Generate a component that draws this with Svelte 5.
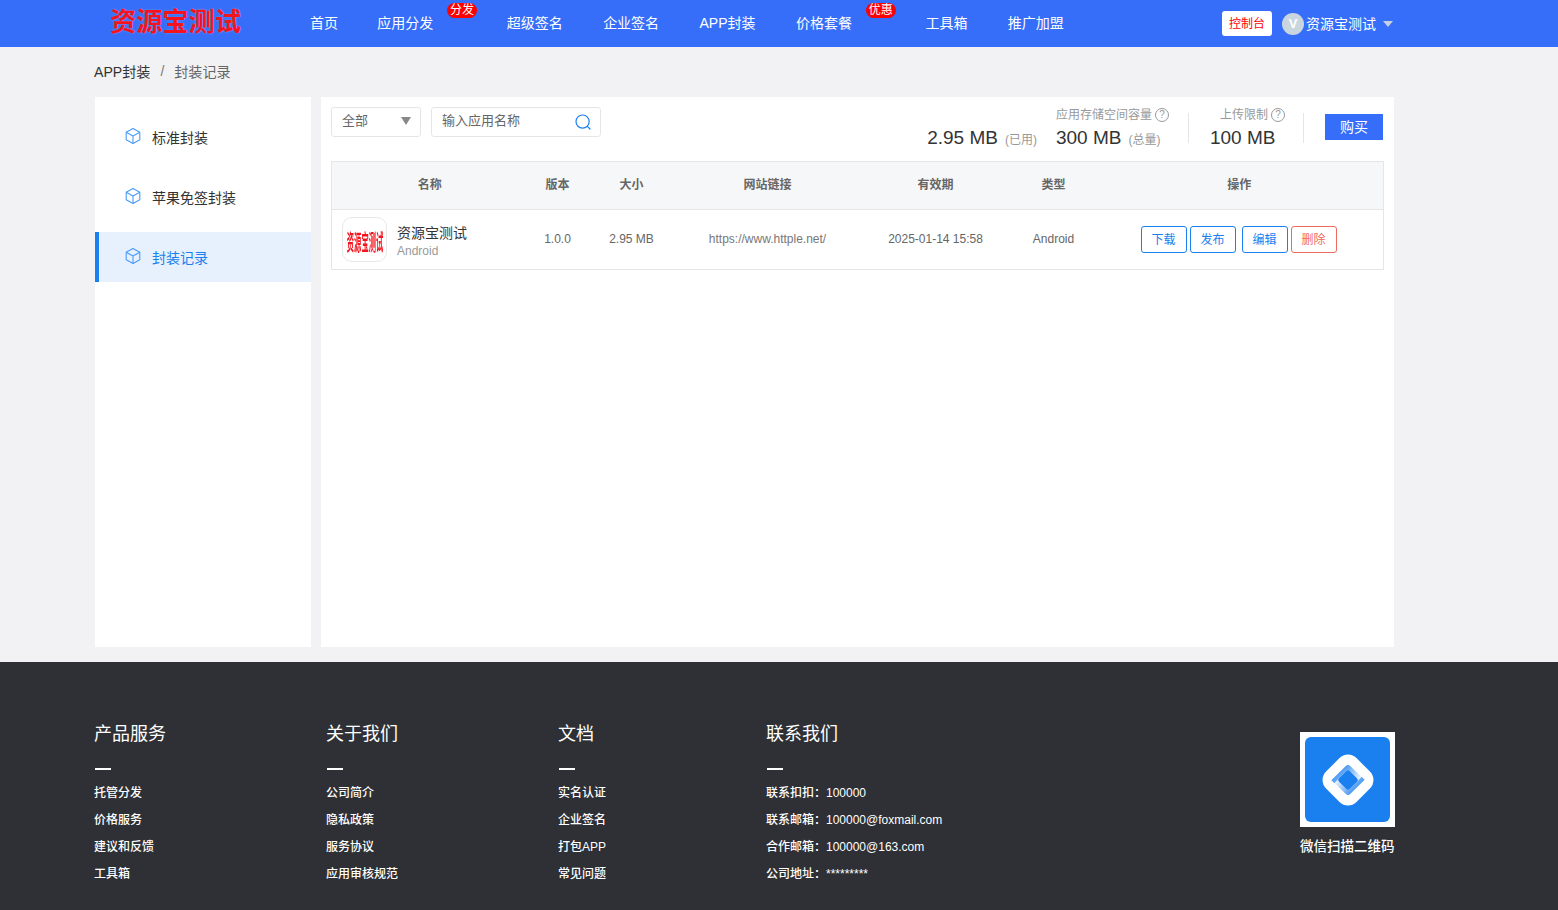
<script>
  const nav = [
    { t: '首页' }, { t: '应用分发', badge: '分发' }, { t: '超级签名' }, { t: '企业签名' },
    { t: 'APP封装' }, { t: '价格套餐', badge: '优惠' }, { t: '工具箱' }, { t: '推广加盟' }
  ];
  const side = [
    { t: '标准封装' }, { t: '苹果免签封装' }, { t: '封装记录', active: true }
  ];
  const cols = ['名称', '版本', '大小', '网站链接', '有效期', '类型', '操作'];
  const footer = [
    { h: '产品服务', w: 'w1', items: ['托管分发', '价格服务', '建议和反馈', '工具箱'] },
    { h: '关于我们', w: 'w1', items: ['公司简介', '隐私政策', '服务协议', '应用审核规范'] },
    { h: '文档', w: 'w2', items: ['实名认证', '企业签名', '打包APP', '常见问题'] },
    { h: '联系我们', w: 'w3', items: ['联系扣扣\uFF1A100000', '联系邮箱\uFF1A100000@foxmail.com', '合作邮箱\uFF1A100000@163.com', '公司地址\uFF1A*********'] }
  ];
</script>

<div class="page">
  <header class="top">
    <div class="logo">资源宝测试</div>
    <nav class="nav">
      {#each nav as n}
        <a class="nav-item" class:has-badge={n.badge}>
          {n.t}
          {#if n.badge}<span class="badge">{n.badge}</span>{/if}
        </a>
      {/each}
    </nav>
    <div class="user">
      <span class="console">控制台</span>
      <span class="avatar">V</span>
      <span class="uname">资源宝测试</span>
      <span class="caret"></span>
    </div>
  </header>

  <div class="crumbs"><span class="c1">APP封装</span><span class="sep">/</span><span class="c2">封装记录</span></div>

  <main class="main">
    <aside class="side">
      {#each side as s}
        <div class="side-item" class:active={s.active}>
          <svg class="cube" viewBox="0 0 16 16" width="16" height="16" fill="none" stroke="#4a9bf5" stroke-width="1.100" stroke-linejoin="round">
            <path d="M8 .6 14.800 4.300V11.700L8 15.400 1.200 11.700V4.300Z" />
            <path d="M1.200 4.300 8 8.100 14.800 4.300M8 8.100V15.400" />
          </svg>
          <span>{s.t}</span>
        </div>
      {/each}
    </aside>

    <section class="content">
      <div class="toolbar">
        <div class="select"><span>全部</span><i class="sel-caret"></i></div>
        <div class="search">
          <span>输入应用名称</span>
          <svg viewBox="0 0 16 16" width="16" height="16" fill="none" stroke="#1a7fef" stroke-width="1.200" stroke-linecap="round">
            <circle cx="7.600" cy="7.600" r="6.600" />
            <path d="M12.400 12.400 15 15" />
          </svg>
        </div>
        <div class="stats">
          <div class="stat used"><div class="val">2.95 MB<small>(已用)</small></div></div>
          <div class="stat total">
            <div class="lbl">应用存储空间容量<span class="q">?</span></div>
            <div class="val">300 MB<small>(总量)</small></div>
          </div>
          <div class="divider"></div>
          <div class="stat limit">
            <div class="lbl">上传限制<span class="q">?</span></div>
            <div class="val">100 MB</div>
          </div>
          <div class="divider d2"></div>
          <button class="buy">购买</button>
        </div>
      </div>

      <table class="table">
        <colgroup>
          <col style="width:196px" /><col style="width:60px" /><col style="width:88px" /><col style="width:184px" />
          <col style="width:152px" /><col style="width:84px" /><col />
        </colgroup>
        <thead>
          <tr>{#each cols as c}<th>{c}</th>{/each}</tr>
        </thead>
        <tbody>
          <tr>
            <td class="app">
              <div class="app-wrap">
                <div class="app-icon"><span>资源宝测试</span></div>
                <div class="app-txt"><div class="app-name">资源宝测试</div><div class="app-os">Android</div></div>
              </div>
            </td>
            <td>1.0.0</td>
            <td>2.95 MB</td>
            <td class="link">https://www.httple.net/</td>
            <td>2025-01-14 15:58</td>
            <td>Android</td>
            <td class="ops-cell">
              <div class="ops">
                <span class="op">下载</span><span class="op">发布</span><span class="op gap">编辑</span><span class="op del">删除</span>
              </div>
            </td>
          </tr>
        </tbody>
      </table>
    </section>
  </main>

  <footer class="foot">
    <div class="foot-in">
      {#each footer as f}
        <div class="fcol {f.w}">
          <div class="fh">{f.h}</div>
          <div class="dash"></div>
          {#each f.items as it}<div class="fi">{it}</div>{/each}
        </div>
      {/each}
      <div class="qr">
        <div class="qr-box">
          <div class="qr-inner">
            <svg viewBox="0 0 52 52" width="52" height="52">
              <defs>
                <linearGradient id="g1" gradientUnits="userSpaceOnUse" x1="14" y1="26" x2="36" y2="26">
                  <stop offset="0" stop-color="#1a7fef" stop-opacity=".8" />
                  <stop offset="1" stop-color="#1a7fef" stop-opacity="0" />
                </linearGradient>
              </defs>
              <g transform="rotate(45 26 26)">
                <rect x="4.500" y="4.500" width="43" height="43" rx="12" fill="#fff" />
                <path d="M14.500 38V18Q14.500 14.500 18 14.500H38V18.500H20Q18.500 18.500 18.500 20V38Z" fill="url(#g1)" />
                <path d="M14.500 38V18Q14.500 14.500 18 14.500H38V18.500H20Q18.500 18.500 18.500 20V38Z" fill="url(#g1)" transform="rotate(180 26 26)" />
                <rect x="18.500" y="18.500" width="15" height="15" rx="2" fill="#1a7fef" />
              </g>
            </svg>
          </div>
        </div>
        <div class="qr-t">微信扫描二维码</div>
      </div>
    </div>
  </footer>
</div>

<style>
  :global(body) {
    margin: 0;
    background: #f2f2f4;
    font-family: "Liberation Sans", "Noto Sans CJK SC", sans-serif;
  }
  .page { width: 1558px; height: 910px; overflow: hidden; display: flex; flex-direction: column; }
  .top { height: 47px; background: #366efa; display: flex; align-items: center; padding-left: 110px; box-sizing: border-box; flex: none; }
  .logo { width: 179.800px; font-size: 26.200px; font-weight: 700; color: #f5141e; line-height: 47px; white-space: nowrap; padding-bottom: 2px; text-shadow: 0 0 2px rgba(255, 255, 255, .35); }
  .nav { display: flex; }
  .nav-item { position: relative; padding: 0 20.200px; color: #fff; font-size: 14px; line-height: 47px; white-space: nowrap; }
  .nav-item:first-child { padding-right: 19px; }
  .nav-item.has-badge { padding-right: 53.400px; }
  .badge { position: absolute; left: 90px; top: 3px; width: 30px; height: 15px; border-radius: 8px; background: #f00; color: #fff; font-size: 12px; line-height: 14px; text-align: center; }
  .user { position: absolute; left: 1222px; top: 11px; display: flex; align-items: center; height: 25px; }
  .console { width: 50px; height: 25px; background: #fff; border-radius: 3px; color: #f00; font-size: 12px; line-height: 26px; text-align: center; }
  .avatar { width: 22px; height: 22px; margin-left: 10px; border-radius: 50%; background: #c9d6e0; color: #fff; font-size: 13px; font-weight: 700; line-height: 22px; text-align: center; }
  .uname { margin-left: 2px; color: #fff; font-size: 14px; padding-bottom: 2px; }
  .caret { margin-left: 7px; width: 0; height: 0; border-left: 5.500px solid transparent; border-right: 5.500px solid transparent; border-top: 6px solid #c5cfe0; }

  .crumbs { height: 50px; padding: 0 0 2px 94px; box-sizing: border-box; display: flex; align-items: center; font-size: 14.100px; flex: none; }
  .c1 { color: #333; }
  .sep { color: #777; margin: 0 10px; font-size: 14px; }
  .c2 { color: #666; }

  .main { display: flex; margin-left: 95px; width: 1299px; height: 550px; gap: 10px; flex: none; }
  .side { width: 216px; background: #fff; padding-top: 15px; box-sizing: border-box; flex: none; }
  .side-item { height: 50px; margin-bottom: 10px; display: flex; align-items: center; padding-left: 30px; box-sizing: border-box; font-size: 14px; color: #333; }
  .side-item span { margin-left: 11px; }
  .cube { margin-top: -3px; }
  .side-item.active { background: #e6f1fd; color: #1a7fef; border-left: 4px solid #1a7fef; padding-left: 26px; }

  .content { flex: 1; background: #fff; padding: 10px; box-sizing: border-box; }
  .toolbar { display: flex; height: 30px; margin-bottom: 24px; position: relative; }
  .select, .search { height: 30px; box-sizing: border-box; border: 1px solid #e4e6ea; border-radius: 3px; display: flex; align-items: center; font-size: 13px; color: #666; }
  .select { width: 90px; padding: 0 9px 0 10px; justify-content: space-between; }
  .select span, .search span { padding-bottom: 5px; }
  .sel-caret { width: 0; height: 0; margin-bottom: 2px; border-left: 5px solid transparent; border-right: 5px solid transparent; border-top: 8px solid #888; }
  .search { width: 170px; margin-left: 10px; padding: 0 9px 0 10px; justify-content: space-between; }
  .stats { margin-left: auto; display: flex; align-items: flex-start; }
  .stat { display: flex; flex-direction: column; }
  .used { margin-right: 19px; }
  .lbl { font-size: 12px; color: #999; line-height: 14px; display: flex; align-items: center; white-space: nowrap; margin-top: 1px; }
  .q { width: 12px; height: 12px; margin-left: 3px; border: 1px solid #999; border-radius: 50%; font-size: 10px; line-height: 12px; text-align: center; color: #999; }
  .val { font-size: 19px; color: #333; line-height: 24px; margin-top: 4px; white-space: nowrap; }
  .val small { font-size: 12px; color: #999; margin-left: 7px; }
  .used .val { margin-top: 19px; }
  .divider { width: 1px; height: 30px; background: #e5e5e5; margin: 6px 0 0 19px; }
  .limit { margin-left: 21px; }
  .limit .lbl { margin-left: 10px; }
  .divider.d2 { margin-left: 18px; }
  .buy { width: 58px; height: 26px; margin: 7px 1px 0 21px; padding: 0 0 2px; border: 0; background: #366efa; color: #fff; font: inherit; font-size: 14px; }

  .table { width: 1053px; border-collapse: collapse; table-layout: fixed; font-size: 12px; color: #666; }
  th, td { text-align: center; padding: 0; border-top: 1px solid #e6e6e6; border-bottom: 1px solid #e6e6e6; }
  th:first-child, td:first-child { border-left: 1px solid #e6e6e6; }
  th:last-child, td:last-child { border-right: 1px solid #e6e6e6; }
  th { height: 48px; padding-bottom: 4px; box-sizing: border-box; background: #f6f7f9; font-weight: 700; color: #666; }
  td { height: 60px; padding-bottom: 2px; box-sizing: border-box; }
  td.app, td.ops-cell { padding-bottom: 0; }
  .app-wrap { display: flex; align-items: center; padding-left: 10px; }
  .app-icon { width: 45px; height: 45px; box-sizing: border-box; border: 1px solid #e8e8e8; border-radius: 10px; display: flex; align-items: center; justify-content: center; overflow: hidden; flex: none; }
  .app-icon span { flex: none; font-size: 22px; font-weight: 700; color: #f5141e; transform: scaleX(.33); white-space: nowrap; filter: blur(.4px); }
  .app-txt { margin-left: 10px; text-align: left; padding-top: 4px; }
  .app-name { font-size: 14px; color: #333; line-height: 17px; }
  .app-os { font-size: 12px; color: #999; line-height: 16px; margin-top: 1px; }
  .link { color: #777; }
  .ops { display: flex; padding-left: 45px; }
  .op { width: 46px; height: 27px; box-sizing: border-box; border: 1px solid #1a7fef; border-radius: 3px; color: #1a7fef; line-height: 26px; margin-right: 3px; }
  .op.gap { margin-left: 3px; }
  .op.del { border-color: #f06a60; color: #f06a60; }

  .foot { flex: 1; margin-top: 15px; background: #2e3035; color: #fff; }
  .foot-in { position: relative; display: flex; padding: 62px 0 0 94px; }
  .fcol { flex: none; }
  .w1 { width: 232px; }
  .w2 { width: 208px; }
  .w3 { width: 300px; }
  .fh { font-size: 18px; line-height: 21px; }
  .dash { width: 16px; height: 2px; margin: 23px 0 10px 1px; background: #fff; }
  .fi { font-size: 12px; font-weight: 500; line-height: 27px; white-space: nowrap; }
  .qr { position: absolute; left: 1300px; top: 70px; width: 95px; }
  .qr-box { width: 95px; height: 95px; background: #fff; padding: 5px; box-sizing: border-box; }
  .qr-inner { width: 85px; height: 85px; border-radius: 6px; background: #1a7fef; display: flex; align-items: center; justify-content: center; }
  .qr-t { margin-top: 12px; font-size: 13.500px; font-weight: 500; line-height: 16px; white-space: nowrap; }
</style>
